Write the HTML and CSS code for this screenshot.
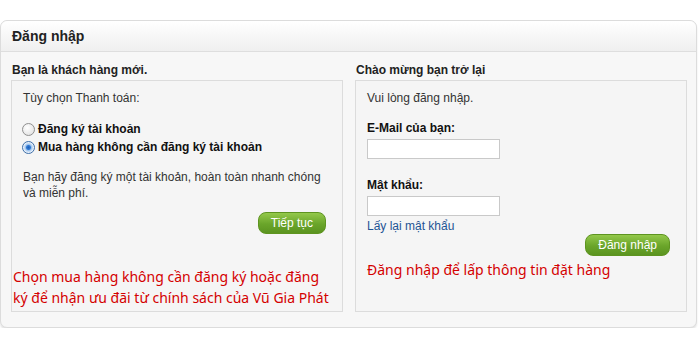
FILE: index.html
```html
<!DOCTYPE html>
<html lang="vi">
<head>
	<meta charset="UTF-8">
	<title>Đăng nhập</title>
	<link rel="stylesheet" href="styles.css">
</head>
<body>

	<div class="box">
		<div class="box-heading">Đăng nhập</div>
		<div class="box-content">
			<div class="column">
				<h2>Bạn là khách hàng mới.</h2>
				<div class="content">
					<p class="first">Tùy chọn Thanh toán:</p>
					<label class="radio"><input type="radio" name="account"> <b>Đăng ký tài khoản</b></label>
					<label class="radio"><input type="radio" name="account" checked> <b>Mua hàng không cần đăng ký tài khoản</b></label>
					<p class="note">Bạn hãy đăng ký một tài khoản, hoàn toàn nhanh chóng và miễn phí.</p>
					<div class="actions">
						<button type="button" class="button">Tiếp tục</button>
					</div>
					<p class="red left-red">Chọn mua hàng không cần đăng ký hoặc đăng ký để nhận ưu đãi từ chính sách của Vũ Gia Phát</p>
				</div>
			</div>
			<div class="column">
				<h2>Chào mừng bạn trở lại</h2>
				<div class="content">
					<p class="first">Vui lòng đăng nhập.</p>
					<b class="label">E-Mail của bạn:</b>
					<input type="text" class="field">
					<b class="label">Mật khẩu:</b>
					<input type="password" class="field">
					<a href="#" class="forgot">Lấy lại mật khẩu</a>
					<div class="actions">
						<button type="button" class="button">Đăng nhập</button>
					</div>
					<p class="red">Đăng nhập để lấp thông tin đặt hàng</p>
				</div>
			</div>
		</div>
	</div>

</body>
</html>
```

FILE: styles.css
```css
*{
	box-sizing: border-box;
}
body{
	margin: 0;
	padding: 0;
	background: #fff;
	font-family: "Liberation Sans", Arial, sans-serif;
	font-size: 12px;
	color: #222;
}
p{
	margin: 0;
}
/*============================================*/
.box{
	margin: 20px 3px 0 0;
	border: 1px solid #dcdcdc;
	border-radius: 7px;
	background: #f7f7f7;
	box-shadow: 0 2px 2px #e4e4e4;
}
.box-heading{
	height: 31px;
	padding: 0 11px;
	line-height: 30px;
	font-size: 14px;
	font-weight: bold;
	color: #222;
	border-bottom: 1px solid #dedede;
	border-radius: 7px 7px 0 0;
	background: linear-gradient(#ffffff, #efefef);
}
.box-content{
	display: grid;
	grid-template-columns: 1fr 1fr;
	column-gap: 12px;
	padding: 0 9px 15px 10px;
}
.column h2{
	margin: 10px 0 2px 1px;
	font-size: 12px;
	line-height: 16px;
	color: #222;
}
.content{
	height: 232px;
	border: 1px solid #dcdcdc;
	background: #f5f5f5;
	padding: 9px 16px 0 11px;
	color: #333;
}
.content .first{
	line-height: 17px;
}

/*left*/
.radio{
	display: flex;
	align-items: center;
	gap: 2px;
	height: 18px;
	color: #111;
}
.radio:first-of-type{
	margin-top: 13px;
}
.radio input{
	appearance: none;
	width: 13px;
	height: 13px;
	margin: 0 1px 0 -1px;
	border: 1px solid #8f8f8f;
	border-radius: 50%;
	background: radial-gradient(circle at 40% 35%, #ffffff, #dcdcdc);
}
.radio input:checked{
	border-color: #3d6ea8;
	background: radial-gradient(circle, #1f5fb8 0, #2f79d4 2px, #9cc3ee 3px, #e8f0fa 5px);
}
.note{
	margin-top: 13px;
	line-height: 16px;
}
.actions{
	display: flex;
	justify-content: flex-end;
}
.content .actions{
	margin-top: 11px;
}
.button{
	height: 22px;
	padding: 0 12px;
	border: 1px solid #5e9420;
	border-radius: 8px;
	background: linear-gradient(#93c84a, #6aa52a 55%, #5b9420);
	color: #fff;
	font-family: "Liberation Sans", Arial, sans-serif;
	font-size: 12px;
}
.red{
	color: #d40000;
	font-family: "Noto Sans", sans-serif;
	font-size: 14px;
	line-height: 21px;
}
.left-red{
	margin: 32px -6px 0 -10px;
}

/*right*/
.label{
	display: block;
	margin-top: 12px;
	line-height: 18px;
	color: #111;
}
.field{
	display: block;
	width: 133px;
	height: 20px;
	margin-top: 2px;
	border: 1px solid #c9c9c9;
	background: #fff;
}
.label + .field + .label{
	margin-top: 17px;
}
.forgot{
	display: block;
	margin-top: 2px;
	line-height: 16px;
	color: #1e5494;
	text-decoration: none;
}
.content .forgot + .actions{
	margin-top: 0;
}
.forgot + .actions + .red{
	margin-top: 3px;
}
```
